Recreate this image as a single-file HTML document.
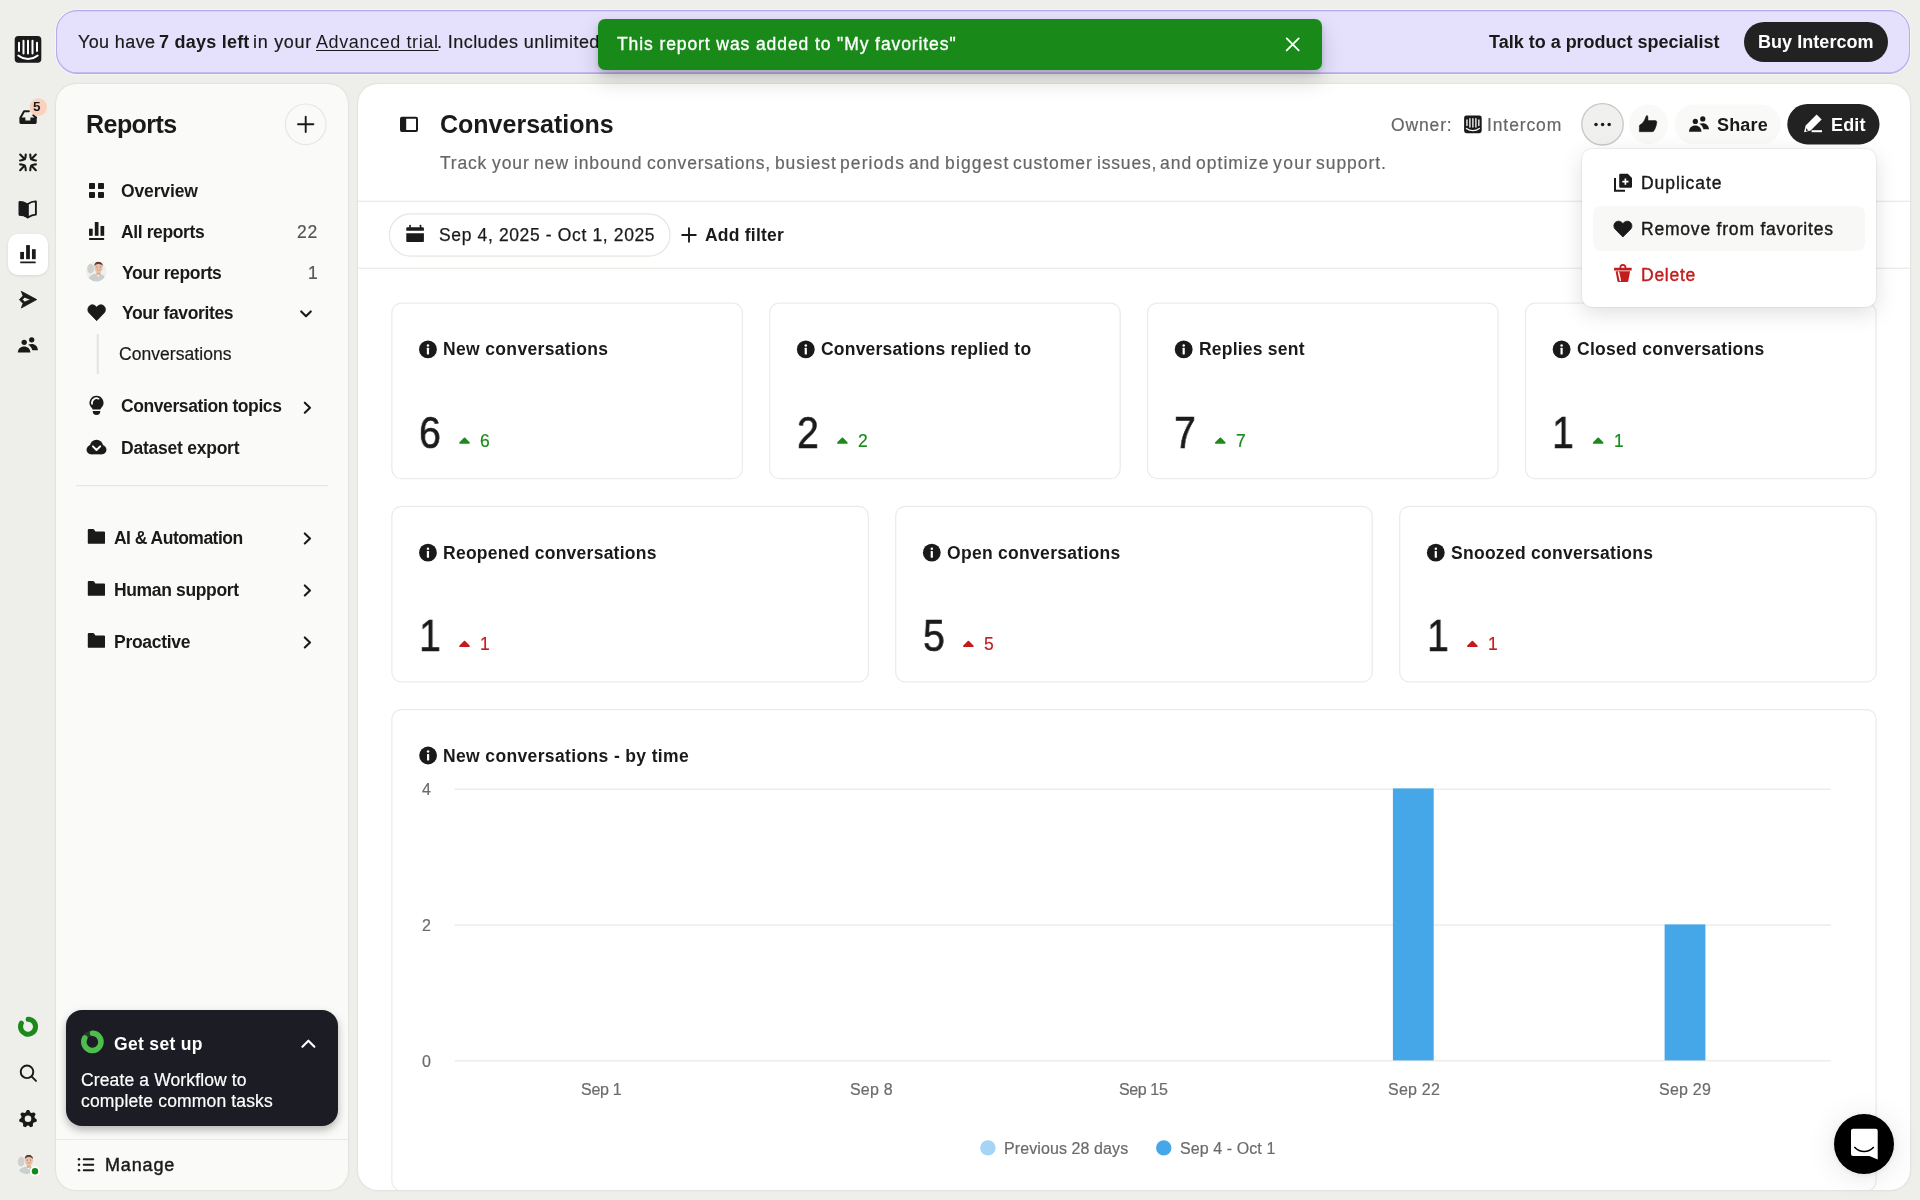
<!DOCTYPE html>
<html lang="en">
<head>
<meta charset="utf-8">
<title>Conversations | Reports</title>
<style>
*{box-sizing:border-box;margin:0;padding:0}
html,body{width:1920px;height:1200px;overflow:hidden}
body{background:#eeeeea;font-family:"Liberation Sans",sans-serif;color:#1a1a1a;position:relative}
.a{position:absolute}
.t{position:absolute;white-space:nowrap;line-height:1;will-change:transform}
svg.L{position:absolute;left:0;top:0;width:1920px;height:1200px;overflow:hidden}
#banner{left:56px;top:10px;width:1854px;height:64px;background:#e5e1fd;border:1.4px solid #b6aaee;border-radius:21px;box-shadow:inset 0 -.8px 0 0 #b9aeee,inset 0 .3px 0 0 #b9aeee,0 0 0 .8px rgba(255,255,255,.5)}
#buy{left:1744px;top:21.6px;width:144.4px;height:40.6px;border-radius:20.3px;background:#222}
#toast{left:598.2px;top:19px;width:723.8px;height:51px;background:#198a19;border-radius:7px;box-shadow:0 10px 22px rgba(0,0,0,.17),0 3px 6px rgba(0,0,0,.16)}
#side{left:56.3px;top:83.8px;width:291.6px;height:1105.9px;background:#fafaf8;border-radius:20px;box-shadow:0 0 2.5px rgba(0,0,0,.13)}
#main{left:358px;top:83.8px;width:1551.8px;height:1105.9px;background:#fff;border-radius:20px;box-shadow:0 0 2.5px rgba(0,0,0,.13)}
#clipm{left:358px;top:83.8px;width:1551.8px;height:1105.9px;border-radius:20px;overflow:hidden}
#railsel{left:8px;top:233.6px;width:40px;height:41px;background:#fff;border-radius:10px;box-shadow:0 1px 3px rgba(0,0,0,.10)}
#setup{left:66px;top:1010px;width:272px;height:116px;background:#1c1c24;border-radius:16px;box-shadow:0 4px 9px rgba(0,0,0,.28)}
#sdiv{left:56.3px;top:1139px;width:291.6px;height:1.2px;background:#e9e9e5}
#menu{left:1582.2px;top:149.3px;width:294px;height:157.5px;background:#fff;border-radius:10px;box-shadow:0 0 0 1px rgba(0,0,0,.05),0 6px 22px rgba(0,0,0,.13)}
#mhi{left:1592.7px;top:205.6px;width:272.5px;height:45.8px;background:#f8f8f7;border-radius:8px}
#chat{left:1834.1px;top:1113.9px;width:60.4px;height:60.4px;border-radius:50%;background:#000;box-shadow:0 3px 30px rgba(0,0,0,.10),0 1px 6px rgba(0,0,0,.08)}
</style>
</head>
<body>
<div id="banner" class="a"></div>
<div id="buy" class="a"></div>
<div id="railsel" class="a"></div>
<div id="side" class="a"></div>
<div id="main" class="a"></div>
<div id="setup" class="a"></div>
<div id="sdiv" class="a"></div>
<svg class="L" viewBox="0 0 1920 1200" style="clip-path:inset(0 0 10.3px 0)"><rect x="14.7" y="36.1" width="26.6" height="26.6" rx="3.6" fill="#1a1a1a"/><path d="M19.00,42.70 V51.10" stroke="#fff" stroke-width="2.00" stroke-linecap="round"/><path d="M23.50,40.70 V53.50" stroke="#fff" stroke-width="2.00" stroke-linecap="round"/><path d="M28.00,40.70 V53.50" stroke="#fff" stroke-width="2.00" stroke-linecap="round"/><path d="M32.50,40.70 V53.50" stroke="#fff" stroke-width="2.00" stroke-linecap="round"/><path d="M37.00,42.70 V51.10" stroke="#fff" stroke-width="2.00" stroke-linecap="round"/><path d="M18.30,55.60 A15.60,15.60 0 0 0 37.70,55.60" fill="none" stroke="#fff" stroke-width="1.90" stroke-linecap="round"/><path d="M20.6,117.6 L24.1,111.3 H28.9" fill="none" stroke="#1a1a1a" stroke-width="2" stroke-linecap="round" stroke-linejoin="round"/><path d="M19.4,117.4 H25.4 V120.6 H30.4 V117.4 H34.4 L35.8,116.2 L36.7,117.6 V122.6 Q36.7,124 35.3,124 H20.8 Q19.4,124 19.4,122.6 Z" fill="#1a1a1a"/><path d="M33.2,115.2 L36.2,117.6" fill="none" stroke="#1a1a1a" stroke-width="1.8" stroke-linecap="round"/><circle cx="38.3" cy="107" r="8.7" fill="#fbd0bd"/><path d="M20.20,154.60 L24.70,159.20" stroke="#1a1a1a" stroke-width="2.15" stroke-linecap="round"/><path d="M25.75,154.50 C25.95,158.70 24.10,160.30 20.10,160.45" fill="none" stroke="#1a1a1a" stroke-width="2.15" stroke-linecap="round"/><path d="M20.20,170.20 L24.70,165.60" stroke="#1a1a1a" stroke-width="2.15" stroke-linecap="round"/><path d="M25.75,170.30 C25.95,166.10 24.10,164.50 20.10,164.35" fill="none" stroke="#1a1a1a" stroke-width="2.15" stroke-linecap="round"/><path d="M35.80,154.60 L31.30,159.20" stroke="#1a1a1a" stroke-width="2.15" stroke-linecap="round"/><path d="M30.25,154.50 C30.05,158.70 31.90,160.30 35.90,160.45" fill="none" stroke="#1a1a1a" stroke-width="2.15" stroke-linecap="round"/><path d="M35.80,170.20 L31.30,165.60" stroke="#1a1a1a" stroke-width="2.15" stroke-linecap="round"/><path d="M30.25,170.30 C30.05,166.10 31.90,164.50 35.90,164.35" fill="none" stroke="#1a1a1a" stroke-width="2.15" stroke-linecap="round"/><path d="M19,201.6 Q23.4,200.9 27.8,204 V217.9 Q23.4,215 19,215.2 Z" fill="#1a1a1a" stroke="#1a1a1a" stroke-width="1" stroke-linejoin="round"/><path d="M27.8,204 Q32,201.2 35.9,201.4 V214.6 Q32,214.8 27.8,217.5 Z" fill="none" stroke="#1a1a1a" stroke-width="1.9" stroke-linejoin="round"/><rect x="20.2" y="251.934" width="3.7740000000000005" height="7.242" fill="#1a1a1a"/><rect x="26.116" y="245.1" width="3.7740000000000005" height="14.076" fill="#1a1a1a"/><rect x="31.93" y="249.18" width="3.7740000000000005" height="9.996" fill="#1a1a1a"/><rect x="20.2" y="261.42" width="15.504" height="1.938" rx=".6" fill="#1a1a1a"/><path fill-rule="evenodd" d="M21.3,291.3 L36.7,299.6 L21.3,308 L23,303.5 L19.4,299.6 L23,295.8 Z M22.4,299.6 L24.6,297.2 L30.6,299.6 L24.6,302 Z" fill="#1a1a1a" stroke="#1a1a1a" stroke-width=".8" stroke-linejoin="round"/><circle cx="24.200000000000003" cy="342.3" r="2.65" fill="#1a1a1a"/><path d="M17.80,352.60 C18.00,348.70 20.60,346.50 24.10,346.50 C27.60,346.50 30.20,348.70 30.40,352.60 Z" fill="#1a1a1a"/><circle cx="31.700000000000003" cy="339.8" r="2.65" fill="#1a1a1a"/><path d="M28.10,344.70 C29.20,344.20 30.40,344.00 31.70,344.00 C35.20,344.00 37.70,346.30 38.00,350.30 L32.40,350.30 C31.90,348.00 30.40,345.90 28.10,344.70 Z" fill="#1a1a1a"/><path d="M28.13,1019.20 A7.5,7.5 0 1 1 21.38,1023.18" fill="none" stroke="#1a8a1a" stroke-width="5" stroke-linecap="round"/><circle cx="27" cy="1071.8" r="6.3" fill="none" stroke="#1a1a1a" stroke-width="1.95"/><path d="M31.7,1076.6 L36,1080.9" stroke="#1a1a1a" stroke-width="1.95" stroke-linecap="round"/><path d="M26.40,1113.02 L27.36,1110.83 L28.64,1110.83 L29.60,1113.02 L31.52,1113.94 L33.84,1113.33 L34.63,1114.33 L33.52,1116.45 L33.99,1118.53 L35.92,1119.95 L35.63,1121.20 L33.28,1121.65 L31.95,1123.32 L32.04,1125.71 L30.88,1126.26 L29.07,1124.70 L26.93,1124.70 L25.12,1126.26 L23.96,1125.71 L24.05,1123.32 L22.72,1121.65 L20.37,1121.20 L20.08,1119.95 L22.01,1118.53 L22.48,1116.45 L21.37,1114.33 L22.16,1113.33 L24.48,1113.94 Z" fill="#1a1a1a" stroke="#1a1a1a" stroke-width="1.8" stroke-linejoin="round"/><circle cx="28" cy="1118.8" r="3.3" fill="#eeeeea"/><clipPath id="av1"><circle cx="26.7" cy="1164.2" r="10"/></clipPath><g clip-path="url(#av1)"><rect x="16.7" y="1154.2" width="20" height="20" fill="#efefed"/><ellipse cx="21.10" cy="1161.60" rx="3.30" ry="4.80" fill="#d0d1cf"/><ellipse cx="27.50" cy="1173.80" rx="9.20" ry="7.40" fill="#c9cfcd"/><path d="M26.30,1166.60 L28.60,1169.80 L31.10,1166.60 Z" fill="#f4f4f2"/><rect x="26.90" y="1163.60" width="3.90" height="4.20" fill="#dcae96"/><ellipse cx="28.90" cy="1160.60" rx="4.00" ry="5.10" fill="#ebc3ac"/><path d="M24.80,1159.60 Q24.50,1154.90 28.90,1154.80 Q33.20,1154.90 33.00,1159.60 Q32.30,1157.10 28.90,1157.10 Q25.50,1157.10 24.80,1159.60 Z" fill="#5e4030"/><circle cx="27.30" cy="1160.00" r="0.55" fill="#7a5646"/><circle cx="30.60" cy="1160.00" r="0.55" fill="#7a5646"/><path d="M27.50,1162.70 Q29.00,1163.90 30.50,1162.70" fill="none" stroke="#c48a78" stroke-width="0.70" stroke-linecap="round"/></g><circle cx="35" cy="1171.3" r="5" fill="#fff"/><circle cx="35" cy="1171.3" r="3.2" fill="#14891a"/><circle cx="305.7" cy="124.3" r="20.3" fill="#fafaf8" stroke="#e6e6e2" stroke-width="1.2"/><path d="M298,124.3 H313.4 M305.7,116.6 V132" stroke="#1a1a1a" stroke-width="1.9" stroke-linecap="round"/><rect x="89" y="183" width="6" height="6" rx=".8" fill="#1a1a1a"/><rect x="98" y="183" width="6" height="6" rx=".8" fill="#1a1a1a"/><rect x="89" y="191.9" width="6" height="6" rx=".8" fill="#1a1a1a"/><rect x="98" y="191.9" width="6" height="6" rx=".8" fill="#1a1a1a"/><rect x="89" y="228.7" width="3.7" height="7.1" fill="#1a1a1a"/><rect x="94.8" y="222" width="3.7" height="13.8" fill="#1a1a1a"/><rect x="100.5" y="226.0" width="3.7" height="9.8" fill="#1a1a1a"/><rect x="89" y="238.0" width="15.2" height="1.9" rx=".6" fill="#1a1a1a"/><clipPath id="av2"><circle cx="96.3" cy="271.3" r="10.2"/></clipPath><g clip-path="url(#av2)"><rect x="86.1" y="261.1" width="20.4" height="20.4" fill="#efefed"/><ellipse cx="90.59" cy="268.65" rx="3.37" ry="4.90" fill="#d0d1cf"/><ellipse cx="97.12" cy="281.09" rx="9.38" ry="7.55" fill="#c9cfcd"/><path d="M95.89,273.75 L98.24,277.01 L100.79,273.75 Z" fill="#f4f4f2"/><rect x="96.50" y="270.69" width="3.98" height="4.28" fill="#dcae96"/><ellipse cx="98.54" cy="267.63" rx="4.08" ry="5.20" fill="#ebc3ac"/><path d="M94.36,266.61 Q94.06,261.81 98.54,261.71 Q102.93,261.81 102.73,266.61 Q102.01,264.06 98.54,264.06 Q95.08,264.06 94.36,266.61 Z" fill="#5e4030"/><circle cx="96.91" cy="267.02" r="0.56" fill="#7a5646"/><circle cx="100.28" cy="267.02" r="0.56" fill="#7a5646"/><path d="M97.12,269.77 Q98.65,270.99 100.18,269.77" fill="none" stroke="#c48a78" stroke-width="0.71" stroke-linecap="round"/></g><path d="M96.65,320.70 L89.07,312.85 C87.03,310.52 87.75,306.59 90.53,305.28 C92.71,304.19 95.34,305.14 96.65,307.32 C97.96,305.14 100.59,304.19 102.78,305.28 C105.55,306.59 106.28,310.52 104.23,312.85 Z" fill="#1a1a1a" stroke="#1a1a1a" stroke-width=".8" stroke-linejoin="round"/><path d="M301.2,311.4 L306,316.2 L310.8,311.4" fill="none" stroke="#1a1a1a" stroke-width="2.1" stroke-linecap="round" stroke-linejoin="round"/><rect x="96.8" y="334" width="1.9" height="40" fill="#e2e2de"/><path d="M96.5,395.7 A7,7 0 0 1 101.6,407.5 Q100.6,408.6 100.4,409.4 H92.6 Q92.4,408.6 91.4,407.5 A7,7 0 0 1 96.5,395.7 Z" fill="#1a1a1a"/><path d="M92.0,403.8 A4.7,4.7 0 0 1 98.6,398.7" fill="none" stroke="#fafaf8" stroke-width="1.75" stroke-linecap="round"/><path d="M92.7,411 H100.3 Q100.3,415 96.5,415 Q92.7,415 92.7,411 Z" fill="#1a1a1a"/><path d="M304.79999999999995,402.7 L310.0,407.7 L304.79999999999995,412.7" fill="none" stroke="#1a1a1a" stroke-width="2.1" stroke-linecap="round" stroke-linejoin="round"/><circle cx="91.2" cy="449.7" r="4.65" fill="#1a1a1a"/><circle cx="101.8" cy="449.7" r="4.65" fill="#1a1a1a"/><circle cx="96.5" cy="446.1" r="6.4" fill="#1a1a1a"/><rect x="91.2" y="447" width="10.6" height="7.35" fill="#1a1a1a"/><path d="M92.9,446.4 L96.5,450 L100.2,446.4" fill="none" stroke="#fafaf8" stroke-width="2" stroke-linecap="round" stroke-linejoin="round"/><rect x="76" y="485" width="252" height="1.2" fill="#e6e6e2"/><path d="M88.7,529 H93.0 Q93.7,529 94.1,529.6 L95.39999999999999,531.5 H104.1 Q105.0,531.5 105.0,532.4 V542.9 Q105.0,543.8 104.1,543.8 H88.7 Q87.8,543.8 87.8,542.9 V529.9 Q87.8,529 88.7,529 Z" fill="#1a1a1a"/><path d="M304.79999999999995,533.4 L310.0,538.4 L304.79999999999995,543.4" fill="none" stroke="#1a1a1a" stroke-width="2.1" stroke-linecap="round" stroke-linejoin="round"/><path d="M88.7,581 H93.0 Q93.7,581 94.1,581.6 L95.39999999999999,583.5 H104.1 Q105.0,583.5 105.0,584.4 V594.9 Q105.0,595.8 104.1,595.8 H88.7 Q87.8,595.8 87.8,594.9 V581.9 Q87.8,581 88.7,581 Z" fill="#1a1a1a"/><path d="M304.79999999999995,585.4 L310.0,590.4 L304.79999999999995,595.4" fill="none" stroke="#1a1a1a" stroke-width="2.1" stroke-linecap="round" stroke-linejoin="round"/><path d="M88.7,633 H93.0 Q93.7,633 94.1,633.6 L95.39999999999999,635.5 H104.1 Q105.0,635.5 105.0,636.4 V646.9 Q105.0,647.8 104.1,647.8 H88.7 Q87.8,647.8 87.8,646.9 V633.9 Q87.8,633 88.7,633 Z" fill="#1a1a1a"/><path d="M304.79999999999995,637.4 L310.0,642.4 L304.79999999999995,647.4" fill="none" stroke="#1a1a1a" stroke-width="2.1" stroke-linecap="round" stroke-linejoin="round"/><circle cx="92.4" cy="1041.9" r="8.6" fill="none" stroke="#27382c" stroke-width="5.5"/><path d="M92.55,1033.30 A8.6,8.6 0 1 1 84.81,1037.86" fill="none" stroke="#4dbd4d" stroke-width="5.5" stroke-linecap="round"/><path d="M302.4,1046.7 L308.4,1040.7 L314.4,1046.7" fill="none" stroke="#fff" stroke-width="2.1" stroke-linecap="round" stroke-linejoin="round"/><circle cx="79" cy="1159.3" r="1.25" fill="#1a1a1a"/><rect x="82.8" y="1158.3" width="11.4" height="2" rx=".8" fill="#1a1a1a"/><circle cx="79" cy="1164.8" r="1.25" fill="#1a1a1a"/><rect x="82.8" y="1163.8" width="11.4" height="2" rx=".8" fill="#1a1a1a"/><circle cx="79" cy="1170.3" r="1.25" fill="#1a1a1a"/><rect x="82.8" y="1169.3" width="11.4" height="2" rx=".8" fill="#1a1a1a"/><rect x="401" y="117.7" width="16" height="13.4" rx="1" fill="none" stroke="#1a1a1a" stroke-width="2"/><rect x="401" y="117.7" width="5.2" height="13.4" fill="#1a1a1a"/><rect x="1464.1" y="115.6" width="17.6" height="17.6" rx="2.381954887218045" fill="#1a1a1a"/><path d="M1466.95,119.97 V125.52" stroke="#fff" stroke-width="1.32" stroke-linecap="round"/><path d="M1469.92,118.64 V127.11" stroke="#fff" stroke-width="1.32" stroke-linecap="round"/><path d="M1472.90,118.64 V127.11" stroke="#fff" stroke-width="1.32" stroke-linecap="round"/><path d="M1475.88,118.64 V127.11" stroke="#fff" stroke-width="1.32" stroke-linecap="round"/><path d="M1478.85,119.97 V125.52" stroke="#fff" stroke-width="1.32" stroke-linecap="round"/><path d="M1466.48,128.50 A10.32,10.32 0 0 0 1479.32,128.50" fill="none" stroke="#fff" stroke-width="1.26" stroke-linecap="round"/><circle cx="1602.5" cy="124.3" r="20.7" fill="#f0f0ee" stroke="#c6c6c2" stroke-width="1.3"/><circle cx="1596" cy="124.5" r="1.75" fill="#1a1a1a"/><circle cx="1602.6" cy="124.5" r="1.75" fill="#1a1a1a"/><circle cx="1609.2" cy="124.5" r="1.75" fill="#1a1a1a"/><circle cx="1648.4" cy="124.3" r="19.6" fill="#f9f9f8"/><path d="M1639.3,131.7 L1639.4,125.6 Q1639.5,125 1640.1,124.7 L1641.3,124 Q1643,122.6 1644,120.9 Q1645.3,118.6 1646,116.4 Q1646.5,115.3 1647.2,115.6 Q1647.9,115.9 1647.9,116.8 L1648,120.6 H1655.4 Q1657,120.8 1656.8,122.4 Q1656.6,124.5 1655.7,127 Q1654.9,129.4 1654,130.7 Q1653.3,131.7 1652.2,131.7 Z" fill="#1a1a1a" stroke="#1a1a1a" stroke-width=".5" stroke-linejoin="round"/><rect x="1674.4" y="104.6" width="106.5" height="39.6" rx="19.8" fill="#f9f9f8"/><circle cx="1695.336" cy="121.448" r="2.6235" fill="#1a1a1a"/><path d="M1689.00,131.65 C1689.20,127.78 1691.77,125.61 1695.24,125.61 C1698.70,125.61 1701.28,127.78 1701.47,131.65 Z" fill="#1a1a1a"/><circle cx="1702.761" cy="118.973" r="2.6235" fill="#1a1a1a"/><path d="M1699.20,123.82 C1700.29,123.33 1701.47,123.13 1702.76,123.13 C1706.23,123.13 1708.70,125.41 1709.00,129.37 L1703.45,129.37 C1702.96,127.09 1701.47,125.01 1699.20,123.82 Z" fill="#1a1a1a"/><rect x="1787.3" y="104" width="92.2" height="40.4" rx="20.2" fill="#222"/><path d="M1816.6,114.5 L1821.6,119.5 L1810.6,130.5 L1804,132.2 L1805.7,125.5 Z" fill="#fff"/><path d="M1805.9,128 L1808.4,130.4 L1806.2,131 Z" fill="#222"/><rect x="1811.6" y="130.2" width="10.4" height="2" fill="#fff"/><rect x="358" y="200.7" width="1552" height="1.2" fill="#e9e9e6"/><rect x="358" y="267.7" width="1552" height="1.2" fill="#e9e9e6"/><rect x="389.4" y="213.8" width="280.6" height="42.4" rx="21.2" fill="#fff" stroke="#e6e6e2" stroke-width="1.2"/><path d="M407.4,227.3 H422.8 Q423.9,227.3 423.9,228.4 V230.7 H406.3 V228.4 Q406.3,227.3 407.4,227.3 Z" fill="#1a1a1a"/><rect x="409.2" y="224.7" width="1.6" height="3.2" rx=".6" fill="#1a1a1a"/><rect x="419.7" y="224.7" width="1.6" height="3.2" rx=".6" fill="#1a1a1a"/><path d="M406.3,233.2 H423.9 V240.9 Q423.9,242.1 422.7,242.1 H407.5 Q406.3,242.1 406.3,240.9 Z" fill="#1a1a1a"/><path d="M682.2,235 H695.8 M689,228.2 V241.8" stroke="#1a1a1a" stroke-width="1.9" stroke-linecap="round"/><rect x="391.85" y="303.1" width="350.5" height="175.6" rx="9.6" fill="#fff" stroke="#ebebe8" stroke-width="1.25"/><circle cx="427.95" cy="349.4" r="8.9" fill="#1a1a1a"/><circle cx="427.95" cy="345.5" r="1.25" fill="#fff"/><rect x="426.84999999999997" y="347.79999999999995" width="2.2" height="6.6" rx=".4" fill="#fff"/><path d="M464.55,438.4 L468.95,442.9 L460.15,442.9 Z" fill="#1a8a1a" stroke="#1a8a1a" stroke-width="1.8" stroke-linejoin="round"/><rect x="769.7" y="303.1" width="350.5" height="175.6" rx="9.6" fill="#fff" stroke="#ebebe8" stroke-width="1.25"/><circle cx="805.8000000000001" cy="349.4" r="8.9" fill="#1a1a1a"/><circle cx="805.8000000000001" cy="345.5" r="1.25" fill="#fff"/><rect x="804.7" y="347.79999999999995" width="2.2" height="6.6" rx=".4" fill="#fff"/><path d="M842.4,438.4 L846.8000000000001,442.9 L838.0,442.9 Z" fill="#1a8a1a" stroke="#1a8a1a" stroke-width="1.8" stroke-linejoin="round"/><rect x="1147.6" y="303.1" width="350.5" height="175.6" rx="9.6" fill="#fff" stroke="#ebebe8" stroke-width="1.25"/><circle cx="1183.7" cy="349.4" r="8.9" fill="#1a1a1a"/><circle cx="1183.7" cy="345.5" r="1.25" fill="#fff"/><rect x="1182.6000000000001" y="347.79999999999995" width="2.2" height="6.6" rx=".4" fill="#fff"/><path d="M1220.3,438.4 L1224.7,442.9 L1215.9,442.9 Z" fill="#1a8a1a" stroke="#1a8a1a" stroke-width="1.8" stroke-linejoin="round"/><rect x="1525.5" y="303.1" width="350.5" height="175.6" rx="9.6" fill="#fff" stroke="#ebebe8" stroke-width="1.25"/><circle cx="1561.6000000000001" cy="349.4" r="8.9" fill="#1a1a1a"/><circle cx="1561.6000000000001" cy="345.5" r="1.25" fill="#fff"/><rect x="1560.5000000000002" y="347.79999999999995" width="2.2" height="6.6" rx=".4" fill="#fff"/><path d="M1598.2,438.4 L1602.6000000000001,442.9 L1593.8000000000002,442.9 Z" fill="#1a8a1a" stroke="#1a8a1a" stroke-width="1.8" stroke-linejoin="round"/><rect x="391.85" y="506.35" width="476.5" height="175.6" rx="9.6" fill="#fff" stroke="#ebebe8" stroke-width="1.25"/><circle cx="427.95" cy="552.65" r="8.9" fill="#1a1a1a"/><circle cx="427.95" cy="548.75" r="1.25" fill="#fff"/><rect x="426.84999999999997" y="551.05" width="2.2" height="6.6" rx=".4" fill="#fff"/><path d="M464.55,641.65 L468.95,646.15 L460.15,646.15 Z" fill="#c41c1c" stroke="#c41c1c" stroke-width="1.8" stroke-linejoin="round"/><rect x="895.7" y="506.35" width="476.5" height="175.6" rx="9.6" fill="#fff" stroke="#ebebe8" stroke-width="1.25"/><circle cx="931.8000000000001" cy="552.65" r="8.9" fill="#1a1a1a"/><circle cx="931.8000000000001" cy="548.75" r="1.25" fill="#fff"/><rect x="930.7" y="551.05" width="2.2" height="6.6" rx=".4" fill="#fff"/><path d="M968.4,641.65 L972.8000000000001,646.15 L964.0,646.15 Z" fill="#c41c1c" stroke="#c41c1c" stroke-width="1.8" stroke-linejoin="round"/><rect x="1399.6999999999998" y="506.35" width="476.5" height="175.6" rx="9.6" fill="#fff" stroke="#ebebe8" stroke-width="1.25"/><circle cx="1435.8" cy="552.65" r="8.9" fill="#1a1a1a"/><circle cx="1435.8" cy="548.75" r="1.25" fill="#fff"/><rect x="1434.7" y="551.05" width="2.2" height="6.6" rx=".4" fill="#fff"/><path d="M1472.3999999999999,641.65 L1476.8,646.15 L1468.0,646.15 Z" fill="#c41c1c" stroke="#c41c1c" stroke-width="1.8" stroke-linejoin="round"/><rect x="391.85" y="709.6" width="1484.3" height="481.2" rx="9.6" fill="#fff" stroke="#ebebe8" stroke-width="1.25"/><circle cx="428.1" cy="755.5" r="8.9" fill="#1a1a1a"/><circle cx="428.1" cy="751.6" r="1.25" fill="#fff"/><rect x="427.0" y="753.9" width="2.2" height="6.6" rx=".4" fill="#fff"/><rect x="454.5" y="788.6" width="1376.5" height="1.25" fill="#e9e9e6"/><rect x="454.5" y="924.4" width="1376.5" height="1.25" fill="#e9e9e6"/><rect x="454.5" y="1060.2" width="1376.5" height="1.25" fill="#e9e9e6"/><rect x="1392.9" y="788.4" width="40.8" height="272" fill="#46a7e8"/><rect x="1664.6" y="924.4" width="40.8" height="136" fill="#46a7e8"/><circle cx="987.9" cy="1147.9" r="7.7" fill="#a6d4f4"/><circle cx="1163.75" cy="1147.9" r="7.7" fill="#46a7e8"/></svg>
<div class="t" id="t0" style="left:77.80px;top:33.00px;font-size:18px;color:#1a1a1a;letter-spacing:0.372px;-webkit-text-stroke:.2px #1a1a1a;">You have</div>
<div class="t" id="t1" style="left:158.70px;top:33.00px;font-size:18px;color:#1a1a1a;font-weight:700;letter-spacing:0.232px;">7 days left</div>
<div class="t" id="t2" style="left:253.00px;top:33.00px;font-size:18px;color:#1a1a1a;letter-spacing:0.710px;-webkit-text-stroke:.2px #1a1a1a;">in your</div>
<div class="t" id="t3" style="left:315.50px;top:33.00px;font-size:18px;color:#1a1a1a;letter-spacing:0.602px;text-decoration:underline;text-decoration-thickness:1.3px;text-underline-offset:2px;">Advanced trial</div>
<div class="t" id="t4" style="left:436.50px;top:33.00px;font-size:18px;color:#1a1a1a;letter-spacing:0.435px;-webkit-text-stroke:.2px #1a1a1a;">. Includes unlimited</div>
<div class="t" id="t5" style="left:1488.60px;top:33.00px;font-size:18px;color:#1a1a1a;font-weight:700;letter-spacing:-0.005px;">Talk to a product specialist</div>
<div class="t" id="t6" style="left:1758.00px;top:33.00px;font-size:18px;color:#fff;font-weight:700;letter-spacing:0.047px;">Buy Intercom</div>
<div class="t" id="t8" style="left:86.30px;top:112.00px;font-size:25px;color:#1a1a1a;font-weight:700;letter-spacing:-0.538px;">Reports</div>
<div class="t" id="t9" style="left:120.80px;top:183.00px;font-size:17.5px;color:#1a1a1a;font-weight:700;letter-spacing:-0.141px;">Overview</div>
<div class="t" id="t10" style="left:121.20px;top:224.00px;font-size:17.5px;color:#1a1a1a;font-weight:700;letter-spacing:-0.385px;">All reports</div>
<div class="t" id="t11" style="left:297.00px;top:224.00px;font-size:17.5px;color:#555;letter-spacing:0.666px;-webkit-text-stroke:.2px #555;">22</div>
<div class="t" id="t12" style="left:121.70px;top:265.00px;font-size:17.5px;color:#1a1a1a;font-weight:700;letter-spacing:-0.352px;">Your reports</div>
<div class="t" id="t13" style="left:307.80px;top:265.00px;font-size:17.5px;color:#555;-webkit-text-stroke:.2px #555;">1</div>
<div class="t" id="t14" style="left:121.70px;top:305.00px;font-size:17.5px;color:#1a1a1a;font-weight:700;letter-spacing:-0.377px;">Your favorites</div>
<div class="t" id="t15" style="left:119.20px;top:346.00px;font-size:17.5px;color:#1a1a1a;letter-spacing:0.048px;-webkit-text-stroke:.2px #1a1a1a;">Conversations</div>
<div class="t" id="t16" style="left:121.20px;top:398.00px;font-size:17.5px;color:#1a1a1a;font-weight:700;letter-spacing:-0.407px;">Conversation topics</div>
<div class="t" id="t17" style="left:121.20px;top:440.00px;font-size:17.5px;color:#1a1a1a;font-weight:700;letter-spacing:-0.234px;">Dataset export</div>
<div class="t" id="t18" style="left:114.40px;top:530.00px;font-size:17.5px;color:#1a1a1a;font-weight:700;letter-spacing:-0.521px;">AI &amp; Automation</div>
<div class="t" id="t19" style="left:114.40px;top:582.00px;font-size:17.5px;color:#1a1a1a;font-weight:700;letter-spacing:-0.355px;">Human support</div>
<div class="t" id="t20" style="left:114.40px;top:634.00px;font-size:17.5px;color:#1a1a1a;font-weight:700;letter-spacing:-0.289px;">Proactive</div>
<div class="t" id="t21" style="left:113.75px;top:1036.00px;font-size:17.5px;color:#fff;font-weight:700;letter-spacing:0.327px;">Get set up</div>
<div class="t" id="t22" style="left:80.60px;top:1072.00px;font-size:17.5px;color:#fff;letter-spacing:0.129px;-webkit-text-stroke:.2px #fff;">Create a Workflow to</div>
<div class="t" id="t23" style="left:80.60px;top:1093.00px;font-size:17.5px;color:#fff;letter-spacing:0.153px;-webkit-text-stroke:.2px #fff;">complete common tasks</div>
<div class="t" id="t24" style="left:104.60px;top:1156.00px;font-size:18px;color:#1a1a1a;letter-spacing:0.856px;-webkit-text-stroke:0.45px #1a1a1a;">Manage</div>
<div class="t" id="t25" style="left:439.75px;top:112.00px;font-size:25px;color:#1a1a1a;font-weight:700;letter-spacing:0.006px;">Conversations</div>
<div class="t" id="t26" style="left:439.75px;top:155.00px;font-size:17.5px;color:#666666;letter-spacing:0.778px;-webkit-text-stroke:.2px #666666;">Track</div>
<div class="t" id="t27" style="left:491.50px;top:155.00px;font-size:17.5px;color:#666666;letter-spacing:0.926px;-webkit-text-stroke:.2px #666666;">your</div>
<div class="t" id="t28" style="left:534.00px;top:155.00px;font-size:17.5px;color:#666666;letter-spacing:1.047px;-webkit-text-stroke:.2px #666666;">new</div>
<div class="t" id="t29" style="left:574.00px;top:155.00px;font-size:17.5px;color:#666666;letter-spacing:0.850px;-webkit-text-stroke:.2px #666666;">inbound</div>
<div class="t" id="t30" style="left:646.50px;top:155.00px;font-size:17.5px;color:#666666;letter-spacing:0.797px;-webkit-text-stroke:.2px #666666;">conversations,</div>
<div class="t" id="t31" style="left:775.00px;top:155.00px;font-size:17.5px;color:#666666;letter-spacing:0.892px;-webkit-text-stroke:.2px #666666;">busiest</div>
<div class="t" id="t32" style="left:840.30px;top:155.00px;font-size:17.5px;color:#666666;letter-spacing:1.085px;-webkit-text-stroke:.2px #666666;">periods</div>
<div class="t" id="t33" style="left:909.00px;top:155.00px;font-size:17.5px;color:#666666;letter-spacing:0.699px;-webkit-text-stroke:.2px #666666;">and</div>
<div class="t" id="t34" style="left:944.90px;top:155.00px;font-size:17.5px;color:#666666;letter-spacing:1.152px;-webkit-text-stroke:.2px #666666;">biggest</div>
<div class="t" id="t35" style="left:1012.70px;top:155.00px;font-size:17.5px;color:#666666;letter-spacing:0.991px;-webkit-text-stroke:.2px #666666;">customer</div>
<div class="t" id="t36" style="left:1096.70px;top:155.00px;font-size:17.5px;color:#666666;letter-spacing:0.819px;-webkit-text-stroke:.2px #666666;">issues,</div>
<div class="t" id="t37" style="left:1160.10px;top:155.00px;font-size:17.5px;color:#666666;letter-spacing:0.999px;-webkit-text-stroke:.2px #666666;">and</div>
<div class="t" id="t38" style="left:1196.40px;top:155.00px;font-size:17.5px;color:#666666;letter-spacing:1.029px;-webkit-text-stroke:.2px #666666;">optimize</div>
<div class="t" id="t39" style="left:1273.00px;top:155.00px;font-size:17.5px;color:#666666;letter-spacing:1.388px;-webkit-text-stroke:.2px #666666;">your</div>
<div class="t" id="t40" style="left:1315.90px;top:155.00px;font-size:17.5px;color:#666666;letter-spacing:0.958px;-webkit-text-stroke:.2px #666666;">support.</div>
<div class="t" id="t41" style="left:1391.20px;top:117.00px;font-size:17.5px;color:#666666;letter-spacing:0.866px;-webkit-text-stroke:.2px #666666;">Owner:</div>
<div class="t" id="t42" style="left:1487.30px;top:117.00px;font-size:17.5px;color:#666666;letter-spacing:0.890px;-webkit-text-stroke:.2px #666666;">Intercom</div>
<div class="t" id="t43" style="left:1717.00px;top:116.00px;font-size:18px;color:#1a1a1a;font-weight:700;letter-spacing:0.154px;">Share</div>
<div class="t" id="t44" style="left:1830.50px;top:116.00px;font-size:18px;color:#fff;font-weight:700;letter-spacing:0.125px;">Edit</div>
<div class="t" id="t45" style="left:439.00px;top:227.00px;font-size:17.5px;color:#1a1a1a;letter-spacing:0.633px;-webkit-text-stroke:0.25px #1a1a1a;">Sep 4, 2025 - Oct 1, 2025</div>
<div class="t" id="t46" style="left:705.25px;top:227.00px;font-size:17.5px;color:#1a1a1a;font-weight:700;letter-spacing:0.219px;">Add filter</div>
<div class="t" id="t50" style="left:443.25px;top:341.00px;font-size:17.5px;color:#1a1a1a;font-weight:700;letter-spacing:0.347px;">New conversations</div>
<div class="t" id="t51" style="left:418.65px;top:412.00px;font-size:43.5px;color:#1a1a1a;-webkit-text-stroke:0.6px #1a1a1a;transform:scaleX(.9);transform-origin:0 0;">6</div>
<div class="t" id="t52" style="left:479.85px;top:433.00px;font-size:17.5px;color:#1a8a1a;-webkit-text-stroke:.2px #1a8a1a;">6</div>
<div class="t" id="t53" style="left:821.10px;top:341.00px;font-size:17.5px;color:#1a1a1a;font-weight:700;letter-spacing:0.213px;">Conversations replied to</div>
<div class="t" id="t54" style="left:796.50px;top:412.00px;font-size:43.5px;color:#1a1a1a;-webkit-text-stroke:0.6px #1a1a1a;transform:scaleX(.9);transform-origin:0 0;">2</div>
<div class="t" id="t55" style="left:857.70px;top:433.00px;font-size:17.5px;color:#1a8a1a;-webkit-text-stroke:.2px #1a8a1a;">2</div>
<div class="t" id="t56" style="left:1199.00px;top:341.00px;font-size:17.5px;color:#1a1a1a;font-weight:700;letter-spacing:0.216px;">Replies sent</div>
<div class="t" id="t57" style="left:1174.40px;top:412.00px;font-size:43.5px;color:#1a1a1a;-webkit-text-stroke:0.6px #1a1a1a;transform:scaleX(.9);transform-origin:0 0;">7</div>
<div class="t" id="t58" style="left:1235.60px;top:433.00px;font-size:17.5px;color:#1a8a1a;-webkit-text-stroke:.2px #1a8a1a;">7</div>
<div class="t" id="t59" style="left:1576.90px;top:341.00px;font-size:17.5px;color:#1a1a1a;font-weight:700;letter-spacing:0.281px;">Closed conversations</div>
<div class="t" id="t60" style="left:1552.30px;top:412.00px;font-size:43.5px;color:#1a1a1a;-webkit-text-stroke:0.6px #1a1a1a;transform:scaleX(.9);transform-origin:0 0;">1</div>
<div class="t" id="t61" style="left:1613.50px;top:433.00px;font-size:17.5px;color:#1a8a1a;-webkit-text-stroke:.2px #1a8a1a;">1</div>
<div class="t" id="t62" style="left:443.25px;top:545.00px;font-size:17.5px;color:#1a1a1a;font-weight:700;letter-spacing:0.253px;">Reopened conversations</div>
<div class="t" id="t63" style="left:418.65px;top:615.00px;font-size:43.5px;color:#1a1a1a;-webkit-text-stroke:0.6px #1a1a1a;transform:scaleX(.9);transform-origin:0 0;">1</div>
<div class="t" id="t64" style="left:479.85px;top:636.00px;font-size:17.5px;color:#c41c1c;-webkit-text-stroke:.2px #c41c1c;">1</div>
<div class="t" id="t65" style="left:947.10px;top:545.00px;font-size:17.5px;color:#1a1a1a;font-weight:700;letter-spacing:0.297px;">Open conversations</div>
<div class="t" id="t66" style="left:922.50px;top:615.00px;font-size:43.5px;color:#1a1a1a;-webkit-text-stroke:0.6px #1a1a1a;transform:scaleX(.9);transform-origin:0 0;">5</div>
<div class="t" id="t67" style="left:983.70px;top:636.00px;font-size:17.5px;color:#c41c1c;-webkit-text-stroke:.2px #c41c1c;">5</div>
<div class="t" id="t68" style="left:1451.10px;top:545.00px;font-size:17.5px;color:#1a1a1a;font-weight:700;letter-spacing:0.279px;">Snoozed conversations</div>
<div class="t" id="t69" style="left:1426.50px;top:615.00px;font-size:43.5px;color:#1a1a1a;-webkit-text-stroke:0.6px #1a1a1a;transform:scaleX(.9);transform-origin:0 0;">1</div>
<div class="t" id="t70" style="left:1487.70px;top:636.00px;font-size:17.5px;color:#c41c1c;-webkit-text-stroke:.2px #c41c1c;">1</div>
<div class="t" id="t71" style="left:442.70px;top:748.00px;font-size:17.5px;color:#1a1a1a;font-weight:700;letter-spacing:0.362px;">New conversations - by time</div>
<div class="t" id="t72" style="left:422.20px;top:782.00px;font-size:16px;color:#6b6b6b;-webkit-text-stroke:.2px #6b6b6b;">4</div>
<div class="t" id="t73" style="left:422.20px;top:918.00px;font-size:16px;color:#6b6b6b;-webkit-text-stroke:.2px #6b6b6b;">2</div>
<div class="t" id="t74" style="left:422.20px;top:1054.00px;font-size:16px;color:#6b6b6b;-webkit-text-stroke:.2px #6b6b6b;">0</div>
<div class="t" id="t75" style="left:581.00px;top:1082.00px;font-size:16px;color:#6b6b6b;letter-spacing:-0.283px;-webkit-text-stroke:.2px #6b6b6b;">Sep 1</div>
<div class="t" id="t76" style="left:850.25px;top:1082.00px;font-size:16px;color:#6b6b6b;letter-spacing:0.188px;-webkit-text-stroke:.2px #6b6b6b;">Sep 8</div>
<div class="t" id="t77" style="left:1118.60px;top:1082.00px;font-size:16px;color:#6b6b6b;letter-spacing:-0.386px;-webkit-text-stroke:.2px #6b6b6b;">Sep 15</div>
<div class="t" id="t78" style="left:1387.75px;top:1082.00px;font-size:16px;color:#6b6b6b;letter-spacing:0.214px;-webkit-text-stroke:.2px #6b6b6b;">Sep 22</div>
<div class="t" id="t79" style="left:1658.60px;top:1082.00px;font-size:16px;color:#6b6b6b;letter-spacing:0.214px;-webkit-text-stroke:.2px #6b6b6b;">Sep 29</div>
<div class="t" id="t80" style="left:1004.30px;top:1141.00px;font-size:16px;color:#6b6b6b;letter-spacing:0.098px;-webkit-text-stroke:.2px #6b6b6b;">Previous 28 days</div>
<div class="t" id="t81" style="left:1179.80px;top:1141.00px;font-size:16px;color:#6b6b6b;letter-spacing:0.087px;-webkit-text-stroke:.2px #6b6b6b;">Sep 4 - Oct 1</div>
<div class="t" id="t82" style="left:33.30px;top:100.00px;font-size:13.5px;color:#1a1a1a;font-weight:700;">5</div>
<div id="menu" class="a"></div>
<div id="mhi" class="a"></div>
<div id="toast" class="a"></div>
<svg class="L" viewBox="0 0 1920 1200"><path d="M1286.7,38.4 L1298.7,50.4 M1298.7,38.4 L1286.7,50.4" stroke="#fff" stroke-width="1.9" stroke-linecap="round"/><path d="M1615,178 V190.8 H1625" fill="none" stroke="#1a1a1a" stroke-width="2" stroke-linecap="butt"/><path d="M1620.4,173.8 H1627.8 L1632,178 V186.6 Q1632,187.8 1630.8,187.8 H1620.4 Q1619.2,187.8 1619.2,186.6 V175 Q1619.2,173.8 1620.4,173.8 Z" fill="#1a1a1a"/><path d="M1622.3,181.6 H1628.5 M1625.4,178.5 V184.7" stroke="#fff" stroke-width="1.7"/><path d="M1622.90,237.00 L1615.10,229.15 C1613.00,226.82 1613.75,222.89 1616.60,221.58 C1618.85,220.49 1621.55,221.44 1622.90,223.62 C1624.25,221.44 1626.95,220.49 1629.20,221.58 C1632.05,222.89 1632.80,226.82 1630.70,229.15 Z" fill="#1a1a1a" stroke="#1a1a1a" stroke-width=".8" stroke-linejoin="round"/><path d="M1620.2,268.2 Q1620.2,264.9 1622.9,264.9 Q1625.6,264.9 1625.6,268.2" fill="none" stroke="#c41c1c" stroke-width="1.6"/><rect x="1614" y="267.8" width="17.7" height="2.7" rx=".6" fill="#c41c1c"/><path d="M1615.6,271.3 H1630.1 L1628.3,280.9 Q1628.1,282 1627,282 H1618.7 Q1617.6,282 1617.4,280.9 Z" fill="#c41c1c"/><path d="M1618.5,272.2 L1620.3,280.4" stroke="#fff" stroke-width="1.5" stroke-linecap="round"/></svg>
<div class="t" id="t7" style="left:617.30px;top:36.00px;font-size:17.5px;color:#fff;letter-spacing:0.905px;-webkit-text-stroke:0.35px #fff;">This report was added to "My favorites"</div>
<div class="t" id="t47" style="left:1641.30px;top:175.00px;font-size:17.5px;color:#1a1a1a;letter-spacing:0.937px;-webkit-text-stroke:0.4px #1a1a1a;">Duplicate</div>
<div class="t" id="t48" style="left:1641.30px;top:221.00px;font-size:17.5px;color:#1a1a1a;letter-spacing:0.794px;-webkit-text-stroke:0.4px #1a1a1a;">Remove from favorites</div>
<div class="t" id="t49" style="left:1641.30px;top:267.00px;font-size:17.5px;color:#c41c1c;letter-spacing:0.751px;-webkit-text-stroke:0.4px #c41c1c;">Delete</div>
<div id="chat" class="a"></div>
<svg class="L" viewBox="0 0 1920 1200"><path d="M1853,1128.8 H1875.7 Q1877.7,1128.8 1877.7,1130.8 V1159.4 L1869.4,1156 H1853 Q1851,1156 1851,1154 V1130.8 Q1851,1128.8 1853,1128.8 Z" fill="#fff"/><path d="M1854.9,1147.5 A12.6,12.6 0 0 0 1873.3,1147.5" fill="none" stroke="#000" stroke-width="1.7" stroke-linecap="round"/></svg>
</body>
</html>
